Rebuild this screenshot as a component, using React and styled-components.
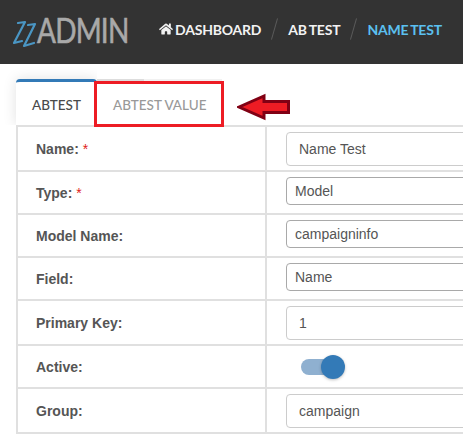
import React from 'react'
import styled, { createGlobalStyle } from 'styled-components'
import { FaHome } from 'react-icons/fa'

const GlobalStyle = createGlobalStyle`
  html, body {
    margin: 0;
    padding: 0;
    background: #fff;
  }
  * {
    box-sizing: border-box;
  }
`

const rows = [
  { label: 'Name:', required: true, value: 'Name Test', height: 45, kind: 'soft' },
  { label: 'Type:', required: true, value: 'Model', height: 43, kind: 'select' },
  { label: 'Model Name:', value: 'campaigninfo', height: 43, kind: 'select' },
  { label: 'Field:', value: 'Name', height: 43, kind: 'select' },
  { label: 'Primary Key:', value: '1', height: 45, kind: 'soft' },
  { label: 'Active:', height: 43, kind: 'switch' },
  { label: 'Group:', value: 'campaign', height: 45, kind: 'soft' },
]

const App = () => {
  return (
    <Page>
      <GlobalStyle />
      <Header>
        <Logo>
          <LogoMark width="26" height="28" viewBox="0 0 26 28" fill="none" stroke="#4a96c4" strokeWidth="2.2" strokeLinejoin="round" strokeLinecap="round">
            <path d="M5 3 L12 2 L1 23 L9 21" />
            <path d="M15 5 L22 4 L11 26 L21 23" />
          </LogoMark>
          <LogoText>ADMIN</LogoText>
        </Logo>
        <Breadcrumb>
          <Crumb><FaHome size={14} /> Dashboard</Crumb>
          <Slash />
          <Crumb>AB Test</Crumb>
          <Slash />
          <Crumb $current>Name Test</Crumb>
        </Breadcrumb>
      </Header>
      <Content>
        <Tabs>
          <Tab $active>ABTEST</Tab>
          <Tab>ABTEST VALUE</Tab>
          <Highlight />
          <Arrow width="58" height="28" viewBox="0 0 58 28">
            <path d="M2 14 L27 3 L27 8.5 L51.5 8.5 L51.5 19.5 L27 19.5 L27 25 Z" fill="#ed1c24" stroke="#800014" strokeWidth="3" />
          </Arrow>
        </Tabs>
        <Table>
          {rows.map((row) => (
            <Row key={row.label} $height={row.height}>
              <Label>
                {row.label}
                {row.required && <Required> *</Required>}
              </Label>
              <Cell>
                {row.kind === 'switch' ? (
                  <Switch><Knob /></Switch>
                ) : (
                  <Field $kind={row.kind}>{row.value}</Field>
                )}
              </Cell>
            </Row>
          ))}
        </Table>
      </Content>
    </Page>
  )
}

export default App

const Page = styled.div`
  width: 463px;
  height: 447px;
  overflow: hidden;
  font-family: "Liberation Sans", Arial, sans-serif;
`

const Header = styled.header`
  height: 64px;
  background: #333;
  display: flex;
  align-items: center;
  padding: 0 0 6px 13px;
`

const Logo = styled.div`
  width: 146px;
  height: 30px;
  display: flex;
  align-items: center;
  flex-shrink: 0;
`

const LogoMark = styled.svg`
  flex-shrink: 0;
  margin-top: 10px;
`

const LogoText = styled.span`
  font-family: "Lato", sans-serif;
  font-size: 35px;
  line-height: 30px;
  color: #a9a9a9;
  letter-spacing: -1px;
  margin-left: -2px;
  -webkit-text-stroke: 0.6px #a9a9a9;
  transform: scaleX(0.8);
  transform-origin: left center;
`

const Breadcrumb = styled.nav`
  display: flex;
  align-items: center;
  font-family: "Lato", sans-serif;
  font-weight: 700;
  font-size: 14px;
  letter-spacing: -0.2px;
  word-spacing: -1px;
  text-transform: uppercase;
`

const Crumb = styled.span`
  display: flex;
  align-items: center;
  gap: 2px;
  white-space: nowrap;
  color: ${(p) => (p.$current ? '#5bc0f0' : '#f2f2f2')};
`

const Slash = styled.span`
  width: 1px;
  height: 22px;
  margin: 0 13px;
  background: #5a5a5a;
  transform: rotate(16deg);
`

const Content = styled.main`
  padding: 15px 0 0 16px;
`

const Tabs = styled.div`
  position: relative;
  display: flex;
  height: 46px;
  font-family: "Lato", sans-serif;
  font-size: 13.5px;
  font-weight: 500;
`

const Tab = styled.div`
  height: 46px;
  display: flex;
  align-items: center;
  padding: 3px 16px 0;
  background: ${(p) => (p.$active ? '#fff' : 'transparent')};
  color: ${(p) => (p.$active ? '#4a4a4a' : '#999')};
  border-top: 3px solid ${(p) => (p.$active ? '#337ab7' : '#ddd')};
  border-image: ${(p) => (p.$active ? 'none' : 'linear-gradient(90deg, #ddd 47px, #f1f1f1 47px) 1')};
  border-radius: 4px 4px 0 0;
  box-shadow: ${(p) => (p.$active ? '0 0 14px rgba(0, 0, 0, 0.12)' : 'none')};
  white-space: nowrap;
  clip-path: ${(p) => (p.$active ? 'inset(-14px 0 0 -14px)' : 'none')};
`

const Highlight = styled.div`
  position: absolute;
  left: 78px;
  top: 2px;
  width: 130px;
  height: 46px;
  border: 3px solid #ed1c24;
`

const Arrow = styled.svg`
  position: absolute;
  left: 221px;
  top: 14px;
`

const Table = styled.div`
  width: 480px;
  border-left: 2px solid #e0e0e0;
  border-top: 2px solid #e0e0e0;
`

const Row = styled.div`
  display: grid;
  grid-template-columns: 247px 1fr;
  height: ${(p) => p.$height}px;
  border-bottom: 2px solid #e0e0e0;
`

const Label = styled.div`
  display: flex;
  align-items: center;
  padding-left: 18px;
  font-size: 14px;
  font-weight: 700;
  color: #555;
  white-space: pre;
`

const Required = styled.span`
  color: #e02020;
  font-weight: 400;
`

const Cell = styled.div`
  display: flex;
  align-items: center;
  padding-left: 19px;
  border-left: 2px solid #e0e0e0;
`

const Field = styled.div`
  width: 300px;
  height: ${(p) => (p.$kind === 'select' ? 28 : 34)}px;
  margin-bottom: ${(p) => (p.$kind === 'select' ? 3 : 0)}px;
  display: flex;
  align-items: center;
  padding-left: ${(p) => (p.$kind === 'select' ? 8 : 12)}px;
  border: 1px solid ${(p) => (p.$kind === 'select' ? '#a9a9a9' : '#ccc')};
  border-radius: 4px;
  font-size: 14px;
  color: #555;
`

const Switch = styled.div`
  position: relative;
  width: 40px;
  height: 16px;
  margin-left: 15px;
  border-radius: 8px;
  background: #8fb0d0;
`

const Knob = styled.span`
  position: absolute;
  right: -4px;
  top: -4px;
  width: 24px;
  height: 24px;
  border-radius: 50%;
  background: #337ab7;
  box-shadow: 0 1px 3px rgba(0, 0, 0, 0.25);
`
